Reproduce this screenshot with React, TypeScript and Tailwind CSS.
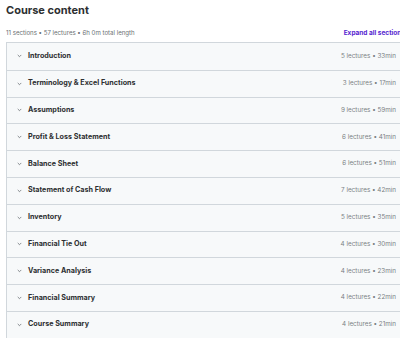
const sections = [
  { title: "Introduction", lectures: 5, length: "33min" },
  { title: "Terminology & Excel Functions", lectures: 3, length: "17min" },
  { title: "Assumptions", lectures: 9, length: "59min" },
  { title: "Profit & Loss Statement", lectures: 6, length: "41min" },
  { title: "Balance Sheet", lectures: 6, length: "51min" },
  { title: "Statement of Cash Flow", lectures: 7, length: "42min" },
  { title: "Inventory", lectures: 5, length: "35min" },
  { title: "Financial Tie Out", lectures: 4, length: "30min" },
  { title: "Variance Analysis", lectures: 4, length: "23min" },
  { title: "Financial Summary", lectures: 4, length: "22min" },
  { title: "Course Summary", lectures: 4, length: "21min" },
];

function Chevron() {
  return (
    <svg width="5" height="4" viewBox="0 0 5 4" fill="none" className="shrink-0">
      <path d="M1 1.2l1.5 1.5 1.5-1.5" stroke="#6a6f73" strokeWidth="0.8" strokeLinecap="round" strokeLinejoin="round" />
    </svg>
  );
}

export default function App() {
  return (
    <div className="h-[338px] w-[400px] overflow-hidden bg-white font-['Inter',sans-serif] text-[#2d2f31]">
      <div className="w-[405px] pl-[6px]">
        <h2 className="pt-[2px] text-[11px] font-bold leading-[16px]">Course content</h2>
        <div className="mt-[11px] flex items-center justify-between">
          <span className="text-[6.1px] leading-[8px] text-[#6a6f73]">11 sections • 57 lectures • 6h 0m total length</span>
          <button className="text-[6.5px] font-bold leading-[8px] text-[#5624d0]">Expand all sections</button>
        </div>
        <div className="mt-[5px] border border-[#d1d7dc]">
          {sections.map((s, i) => (
            <div
              key={s.title}
              className={`flex h-[26.8px] items-center justify-between bg-[#f7f9fa] pl-[10px] pr-[8px] ${i > 0 ? "border-t border-[#d1d7dc]" : ""}`}
            >
              <div className="flex items-center gap-[6px]">
                <Chevron />
                <span className="text-[7.2px] font-bold">{s.title}</span>
              </div>
              <span className="text-[6.3px] text-[#7a7f83]">
                {s.lectures} lectures • {s.length}
              </span>
            </div>
          ))}
        </div>
      </div>
    </div>
  );
}
